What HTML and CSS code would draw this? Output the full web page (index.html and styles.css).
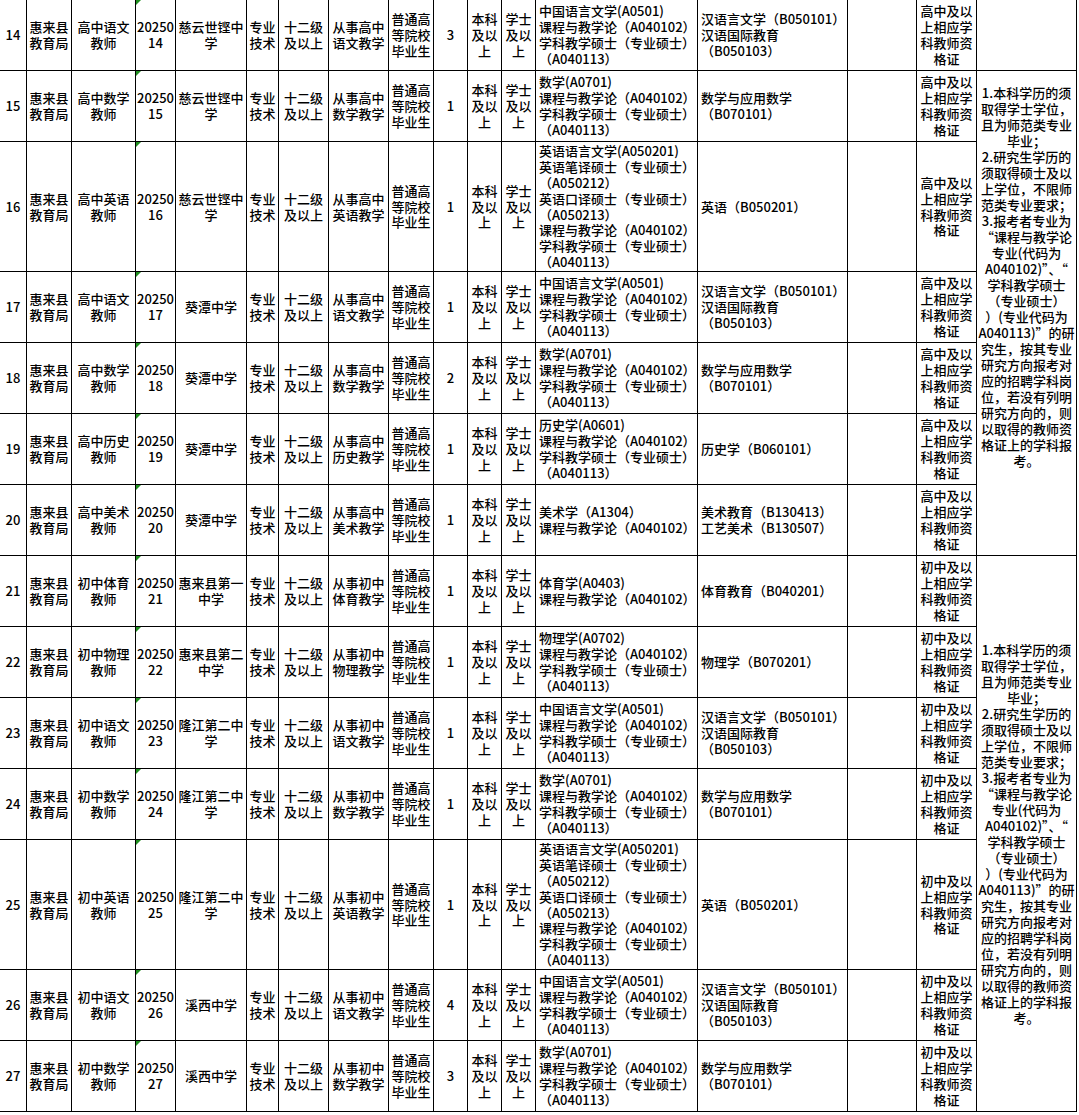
FILE: index.html
```html
<!DOCTYPE html>
<html lang="zh-CN">
<head>
<meta charset="utf-8">
<title>惠来县教育局招聘岗位表</title>
<link rel="stylesheet" href="styles.css">
</head>
<body>
<div class="sheet">
<!-- 14 -->
<div class="c">14</div><div class="c">惠来县<br>教育局</div><div class="c">高中语文<br>教师</div><div class="c code">20250<br>14</div><div class="c">慈云世铿中<br>学</div><div class="c">专业<br>技术</div><div class="c">十二级<br>及以上</div><div class="c">从事高中<br>语文教学</div><div class="c">普通高<br>等院校<br>毕业生</div><div class="c">3</div><div class="c">本科<br>及以<br>上</div><div class="c">学士<br>及以<br>上</div><div class="c l">中国语言文学(A0501)<br>课程与教学论（A040102）<br>学科教学硕士（专业硕士）<br>（A040113）</div><div class="c l">汉语言文学（B050101）<br>汉语国际教育<br>（B050103）</div><div class="c"></div><div class="c">高中及以<br>上相应学<br>科教师资<br>格证</div><div class="c"></div>
<!-- 15 -->
<div class="c">15</div><div class="c">惠来县<br>教育局</div><div class="c">高中数学<br>教师</div><div class="c code">20250<br>15</div><div class="c">慈云世铿中<br>学</div><div class="c">专业<br>技术</div><div class="c">十二级<br>及以上</div><div class="c">从事高中<br>数学教学</div><div class="c">普通高<br>等院校<br>毕业生</div><div class="c">1</div><div class="c">本科<br>及以<br>上</div><div class="c">学士<br>及以<br>上</div><div class="c l">数学(A0701)<br>课程与教学论（A040102）<br>学科教学硕士（专业硕士）<br>（A040113）</div><div class="c l">数学与应用数学<br>（B070101）</div><div class="c"></div><div class="c">高中及以<br>上相应学<br>科教师资<br>格证</div>
<div class="c note note-a">1.本科学历的须<br>取得学士学位，<br>且为师范类专业<br>毕业；<br>2.研究生学历的<br>须取得硕士及以<br>上学位，不限师<br>范类专业要求；<br>3.报考者专业为<br>“课程与教学论<br>专业(代码为<br>A040102)”、“<br>学科教学硕士<br>（专业硕士）<br>）(专业代码为<br>A040113)”的研<br>究生，按其专业<br>研究方向报考对<br>应的招聘学科岗<br>位，若没有列明<br>研究方向的，则<br>以取得的教师资<br>格证上的学科报<br>考。</div>
<!-- 16 -->
<div class="c">16</div><div class="c">惠来县<br>教育局</div><div class="c">高中英语<br>教师</div><div class="c code">20250<br>16</div><div class="c">慈云世铿中<br>学</div><div class="c">专业<br>技术</div><div class="c">十二级<br>及以上</div><div class="c">从事高中<br>英语教学</div><div class="c">普通高<br>等院校<br>毕业生</div><div class="c">1</div><div class="c">本科<br>及以<br>上</div><div class="c">学士<br>及以<br>上</div><div class="c l">英语语言文学(A050201)<br>英语笔译硕士（专业硕士）<br>（A050212）<br>英语口译硕士（专业硕士）<br>（A050213）<br>课程与教学论（A040102）<br>学科教学硕士（专业硕士）<br>（A040113）</div><div class="c l">英语（B050201）</div><div class="c"></div><div class="c">高中及以<br>上相应学<br>科教师资<br>格证</div>
<!-- 17 -->
<div class="c">17</div><div class="c">惠来县<br>教育局</div><div class="c">高中语文<br>教师</div><div class="c code">20250<br>17</div><div class="c">葵潭中学</div><div class="c">专业<br>技术</div><div class="c">十二级<br>及以上</div><div class="c">从事高中<br>语文教学</div><div class="c">普通高<br>等院校<br>毕业生</div><div class="c">1</div><div class="c">本科<br>及以<br>上</div><div class="c">学士<br>及以<br>上</div><div class="c l">中国语言文学(A0501)<br>课程与教学论（A040102）<br>学科教学硕士（专业硕士）<br>（A040113）</div><div class="c l">汉语言文学（B050101）<br>汉语国际教育<br>（B050103）</div><div class="c"></div><div class="c">高中及以<br>上相应学<br>科教师资<br>格证</div>
<!-- 18 -->
<div class="c">18</div><div class="c">惠来县<br>教育局</div><div class="c">高中数学<br>教师</div><div class="c code">20250<br>18</div><div class="c">葵潭中学</div><div class="c">专业<br>技术</div><div class="c">十二级<br>及以上</div><div class="c">从事高中<br>数学教学</div><div class="c">普通高<br>等院校<br>毕业生</div><div class="c">2</div><div class="c">本科<br>及以<br>上</div><div class="c">学士<br>及以<br>上</div><div class="c l">数学(A0701)<br>课程与教学论（A040102）<br>学科教学硕士（专业硕士）<br>（A040113）</div><div class="c l">数学与应用数学<br>（B070101）</div><div class="c"></div><div class="c">高中及以<br>上相应学<br>科教师资<br>格证</div>
<!-- 19 -->
<div class="c">19</div><div class="c">惠来县<br>教育局</div><div class="c">高中历史<br>教师</div><div class="c code">20250<br>19</div><div class="c">葵潭中学</div><div class="c">专业<br>技术</div><div class="c">十二级<br>及以上</div><div class="c">从事高中<br>历史教学</div><div class="c">普通高<br>等院校<br>毕业生</div><div class="c">1</div><div class="c">本科<br>及以<br>上</div><div class="c">学士<br>及以<br>上</div><div class="c l">历史学(A0601)<br>课程与教学论（A040102）<br>学科教学硕士（专业硕士）<br>（A040113）</div><div class="c l">历史学（B060101）</div><div class="c"></div><div class="c">高中及以<br>上相应学<br>科教师资<br>格证</div>
<!-- 20 -->
<div class="c">20</div><div class="c">惠来县<br>教育局</div><div class="c">高中美术<br>教师</div><div class="c code">20250<br>20</div><div class="c">葵潭中学</div><div class="c">专业<br>技术</div><div class="c">十二级<br>及以上</div><div class="c">从事高中<br>美术教学</div><div class="c">普通高<br>等院校<br>毕业生</div><div class="c">1</div><div class="c">本科<br>及以<br>上</div><div class="c">学士<br>及以<br>上</div><div class="c l">美术学（A1304）<br>课程与教学论（A040102）</div><div class="c l">美术教育（B130413）<br>工艺美术（B130507）</div><div class="c"></div><div class="c">高中及以<br>上相应学<br>科教师资<br>格证</div>
<!-- 21 -->
<div class="c">21</div><div class="c">惠来县<br>教育局</div><div class="c">初中体育<br>教师</div><div class="c code">20250<br>21</div><div class="c">惠来县第一<br>中学</div><div class="c">专业<br>技术</div><div class="c">十二级<br>及以上</div><div class="c">从事初中<br>体育教学</div><div class="c">普通高<br>等院校<br>毕业生</div><div class="c">1</div><div class="c">本科<br>及以<br>上</div><div class="c">学士<br>及以<br>上</div><div class="c l">体育学(A0403)<br>课程与教学论（A040102）</div><div class="c l">体育教育（B040201）</div><div class="c"></div><div class="c">初中及以<br>上相应学<br>科教师资<br>格证</div>
<div class="c note note-b">1.本科学历的须<br>取得学士学位，<br>且为师范类专业<br>毕业；<br>2.研究生学历的<br>须取得硕士及以<br>上学位，不限师<br>范类专业要求；<br>3.报考者专业为<br>“课程与教学论<br>专业(代码为<br>A040102)”、“<br>学科教学硕士<br>（专业硕士）<br>）(专业代码为<br>A040113)”的研<br>究生，按其专业<br>研究方向报考对<br>应的招聘学科岗<br>位，若没有列明<br>研究方向的，则<br>以取得的教师资<br>格证上的学科报<br>考。</div>
<!-- 22 -->
<div class="c">22</div><div class="c">惠来县<br>教育局</div><div class="c">初中物理<br>教师</div><div class="c code">20250<br>22</div><div class="c">惠来县第二<br>中学</div><div class="c">专业<br>技术</div><div class="c">十二级<br>及以上</div><div class="c">从事初中<br>物理教学</div><div class="c">普通高<br>等院校<br>毕业生</div><div class="c">1</div><div class="c">本科<br>及以<br>上</div><div class="c">学士<br>及以<br>上</div><div class="c l">物理学(A0702)<br>课程与教学论（A040102）<br>学科教学硕士（专业硕士）<br>（A040113）</div><div class="c l">物理学（B070201）</div><div class="c"></div><div class="c">初中及以<br>上相应学<br>科教师资<br>格证</div>
<!-- 23 -->
<div class="c">23</div><div class="c">惠来县<br>教育局</div><div class="c">初中语文<br>教师</div><div class="c code">20250<br>23</div><div class="c">隆江第二中<br>学</div><div class="c">专业<br>技术</div><div class="c">十二级<br>及以上</div><div class="c">从事初中<br>语文教学</div><div class="c">普通高<br>等院校<br>毕业生</div><div class="c">1</div><div class="c">本科<br>及以<br>上</div><div class="c">学士<br>及以<br>上</div><div class="c l">中国语言文学(A0501)<br>课程与教学论（A040102）<br>学科教学硕士（专业硕士）<br>（A040113）</div><div class="c l">汉语言文学（B050101）<br>汉语国际教育<br>（B050103）</div><div class="c"></div><div class="c">初中及以<br>上相应学<br>科教师资<br>格证</div>
<!-- 24 -->
<div class="c">24</div><div class="c">惠来县<br>教育局</div><div class="c">初中数学<br>教师</div><div class="c code">20250<br>24</div><div class="c">隆江第二中<br>学</div><div class="c">专业<br>技术</div><div class="c">十二级<br>及以上</div><div class="c">从事初中<br>数学教学</div><div class="c">普通高<br>等院校<br>毕业生</div><div class="c">1</div><div class="c">本科<br>及以<br>上</div><div class="c">学士<br>及以<br>上</div><div class="c l">数学(A0701)<br>课程与教学论（A040102）<br>学科教学硕士（专业硕士）<br>（A040113）</div><div class="c l">数学与应用数学<br>（B070101）</div><div class="c"></div><div class="c">初中及以<br>上相应学<br>科教师资<br>格证</div>
<!-- 25 -->
<div class="c">25</div><div class="c">惠来县<br>教育局</div><div class="c">初中英语<br>教师</div><div class="c code">20250<br>25</div><div class="c">隆江第二中<br>学</div><div class="c">专业<br>技术</div><div class="c">十二级<br>及以上</div><div class="c">从事初中<br>英语教学</div><div class="c">普通高<br>等院校<br>毕业生</div><div class="c">1</div><div class="c">本科<br>及以<br>上</div><div class="c">学士<br>及以<br>上</div><div class="c l">英语语言文学(A050201)<br>英语笔译硕士（专业硕士）<br>（A050212）<br>英语口译硕士（专业硕士）<br>（A050213）<br>课程与教学论（A040102）<br>学科教学硕士（专业硕士）<br>（A040113）</div><div class="c l">英语（B050201）</div><div class="c"></div><div class="c">初中及以<br>上相应学<br>科教师资<br>格证</div>
<!-- 26 -->
<div class="c">26</div><div class="c">惠来县<br>教育局</div><div class="c">初中语文<br>教师</div><div class="c code">20250<br>26</div><div class="c">溪西中学</div><div class="c">专业<br>技术</div><div class="c">十二级<br>及以上</div><div class="c">从事初中<br>语文教学</div><div class="c">普通高<br>等院校<br>毕业生</div><div class="c">4</div><div class="c">本科<br>及以<br>上</div><div class="c">学士<br>及以<br>上</div><div class="c l">中国语言文学(A0501)<br>课程与教学论（A040102）<br>学科教学硕士（专业硕士）<br>（A040113）</div><div class="c l">汉语言文学（B050101）<br>汉语国际教育<br>（B050103）</div><div class="c"></div><div class="c">初中及以<br>上相应学<br>科教师资<br>格证</div>
<!-- 27 -->
<div class="c">27</div><div class="c">惠来县<br>教育局</div><div class="c">初中数学<br>教师</div><div class="c code">20250<br>27</div><div class="c">溪西中学</div><div class="c">专业<br>技术</div><div class="c">十二级<br>及以上</div><div class="c">从事初中<br>数学教学</div><div class="c">普通高<br>等院校<br>毕业生</div><div class="c">3</div><div class="c">本科<br>及以<br>上</div><div class="c">学士<br>及以<br>上</div><div class="c l">数学(A0701)<br>课程与教学论（A040102）<br>学科教学硕士（专业硕士）<br>（A040113）</div><div class="c l">数学与应用数学<br>（B070101）</div><div class="c"></div><div class="c">初中及以<br>上相应学<br>科教师资<br>格证</div>
</div>
</body>
</html>
```

FILE: styles.css
```css
html, body {
  margin: 0;
  padding: 0;
  background: #ffffff;
}

.sheet {
  display: grid;
  grid-template-columns: 27px 45px 64px 40px 71px 32px 50px 60px 45px 34px 34px 34px 162px 150px 69px 60px 100px;
  grid-template-rows: 71px 71px 130px 71px 71px 71px 71px 71px 71px 71px 71px 130px 71px 71px;
  width: 1077px;
  font-family: "Noto Sans CJK SC", "Noto Sans", sans-serif;
  font-size: 13px;
  font-weight: 500;
  line-height: 15.9px;
  color: #000000;
}

.c {
  box-sizing: border-box;
  position: relative;
  display: flex;
  align-items: center;
  justify-content: center;
  text-align: center;
  white-space: nowrap;
  border-right: 1px solid #000000;
  border-bottom: 1px solid #000000;
  padding: 0 1px;
  overflow: visible;
}

.c.l {
  justify-content: flex-start;
  text-align: left;
  padding-left: 3px;
}

.code::before {
  content: "";
  position: absolute;
  top: 0;
  left: 0;
  width: 0;
  height: 0;
  border-top: 5px solid #1f8f1f;
  border-right: 5px solid transparent;
}

.note {
  line-height: 16px;
  padding: 0 1px;
}

.note-a {
  grid-row: span 6;
  align-items: flex-start;
  padding-top: 14px;
}

.note-b {
  grid-row: span 7;
}
```
